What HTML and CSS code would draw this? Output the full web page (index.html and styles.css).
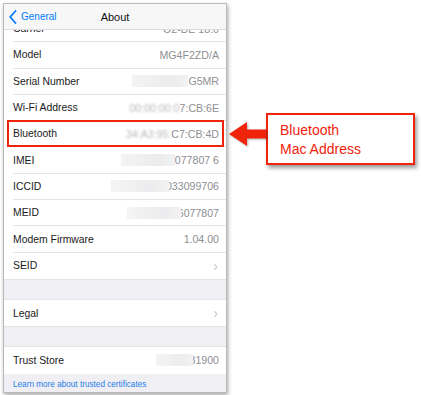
FILE: index.html
```html
<!DOCTYPE html>
<html lang="en">
<head>
  <meta charset="UTF-8" />
  <meta name="viewport" content="width=device-width, initial-scale=1.0"/>
  <title>About - Bluetooth Mac Address</title>
  <link rel="stylesheet" href="styles.css">
</head>
<body>
  <div class="page">

    <!-- Phone screen -->
    <div class="phone">
      <header class="navbar">
        <a class="back" href="#">
          <svg width="8" height="14" viewBox="0 0 8 14"><path d="M6.5 1 L1.2 7 L6.5 13" fill="none" stroke="#007aff" stroke-width="1.8" stroke-linecap="round" stroke-linejoin="round"/></svg>
          General
        </a>
        <span class="title">About</span>
      </header>

      <div class="viewport">
        <ul class="list scrolled">
          <li><span class="label">Carrier</span><span class="value">O2-DE 18.0</span></li>
          <li><span class="label">Model</span><span class="value">MG4F2ZD/A</span></li>
          <li><span class="label">Serial Number</span><span class="value"><span class="smudge w56"></span>G5MR</span></li>
          <li><span class="label">Wi-Fi Address</span><span class="value"><span class="fuzz">00:00:00:0</span>7:CB:6E</span></li>
          <li class="marked"><span class="label">Bluetooth</span><span class="value"><span class="fuzz">34:A3:95:</span>C7:CB:4D</span></li>
          <li><span class="label">IMEI</span><span class="value"><span class="smudge w54"></span>077807 6</span></li>
          <li><span class="label">ICCID</span><span class="value"><span class="smudge w58 over"></span>033099706</span></li>
          <li><span class="label">MEID</span><span class="value"><span class="smudge w54 over"></span>6077807</span></li>
          <li><span class="label">Modem Firmware</span><span class="value">1.04.00</span></li>
          <li class="last"><span class="label">SEID</span><span class="chevron">&#x203A;</span></li>
        </ul>

        <div class="gap"></div>
        <ul class="list">
          <li class="last"><span class="label">Legal</span><span class="chevron">&#x203A;</span></li>
        </ul>

        <div class="gap"></div>
        <ul class="list">
          <li class="last"><span class="label">Trust Store</span><span class="value"><span class="smudge w37 over"></span>31900</span></li>
        </ul>

        <div class="footer">
          <a href="#">Learn more about trusted certificates</a>
        </div>
      </div>
    </div>

    <!-- Annotation -->
    <svg class="arrow" width="38" height="26" viewBox="0 0 38 26">
      <polygon points="1,13 19,1 19,8.5 38,8.5 38,17.5 19,17.5 19,25" fill="#f0230b"/>
    </svg>
    <div class="callout">
      Bluetooth<br>Mac Address
    </div>

  </div>
</body>
</html>
```

FILE: styles.css
```css
body {
  margin: 0;
  background: #ffffff;
  font-family: "Liberation Sans", Arial, sans-serif;
}

.page {
  display: flex;
  align-items: flex-start;
  padding: 3px;
}

.phone {
  width: 222px;
  height: 388px;
  border: 1px solid #b9b9b9;
  box-shadow: 1px 2px 4px rgba(0, 0, 0, 0.35);
  background: #efeff4;
  display: flex;
  flex-direction: column;
  overflow: hidden;
  flex-shrink: 0;
}

.navbar {
  height: 25px;
  background: #f7f7f8;
  border-bottom: 1px solid #dcdcdf;
  display: flex;
  align-items: center;
  position: relative;
  z-index: 1;
  flex-shrink: 0;
}

.back {
  display: flex;
  align-items: center;
  gap: 4px;
  padding-left: 5px;
  color: #007aff;
  font-size: 10px;
  text-decoration: none;
}

.title {
  position: absolute;
  left: 0;
  right: 0;
  text-align: center;
  font-size: 11px;
  color: #111;
  pointer-events: none;
}

.viewport {
  flex: 1;
  overflow: hidden;
}

.list {
  list-style: none;
  margin: 0;
  padding: 0;
  background: #ffffff;
}

.list.scrolled {
  margin-top: -14px;
}

.list li {
  height: 26.3px;
  display: flex;
  align-items: center;
  justify-content: space-between;
  margin-left: 9px;
  padding-right: 7px;
  border-bottom: 1px solid #e4e4e6;
  box-sizing: border-box;
  font-size: 10.4px;
  position: relative;
}

.list li.last {
  border-bottom: none;
  margin-left: 0;
  padding-left: 9px;
}

.label {
  color: #1a1a1a;
}

.value {
  color: #8e8e93;
  font-size: 10.6px;
  display: flex;
  align-items: center;
}

.chevron {
  color: #c7c7cc;
  font-size: 14px;
  line-height: 1;
  margin-right: 1px;
}

.fuzz {
  color: #b9b9be;
  filter: blur(0.8px);
}

.smudge {
  display: inline-block;
  height: 12px;
  background: linear-gradient(90deg, #f4f4f5, #ececee 70%, #f2f2f3);
  filter: blur(0.6px);
}

.smudge.over {
  margin-right: -3px;
  position: relative;
  z-index: 1;
}

.w37 { width: 37px; }
.w54 { width: 54px; }
.w56 { width: 56px; }
.w58 { width: 58px; }

.marked::after {
  content: "";
  position: absolute;
  left: -6px;
  right: 2px;
  top: -1px;
  bottom: -1px;
  border: 2px solid #f0230b;
}

.gap {
  height: 19px;
  border-top: 1px solid #e4e4e6;
  border-bottom: 1px solid #e4e4e6;
}

.footer {
  padding: 6px 0 0 9px;
  font-size: 8.2px;
}

.footer a {
  color: #1f7ee8;
  text-decoration: none;
}

.arrow {
  margin-top: 118px;
  margin-left: 1px;
  filter: drop-shadow(1px 1px 1px rgba(0, 0, 0, 0.3));
  flex-shrink: 0;
}

.callout {
  margin-top: 110px;
  width: 149px;
  height: 52px;
  border: 2px solid #f0230b;
  background: #ffffff;
  box-shadow: 2px 3px 4px rgba(0, 0, 0, 0.4);
  color: #f0230b;
  font-size: 14px;
  line-height: 19px;
  padding: 6px 0 0 12px;
  box-sizing: border-box;
}
```
